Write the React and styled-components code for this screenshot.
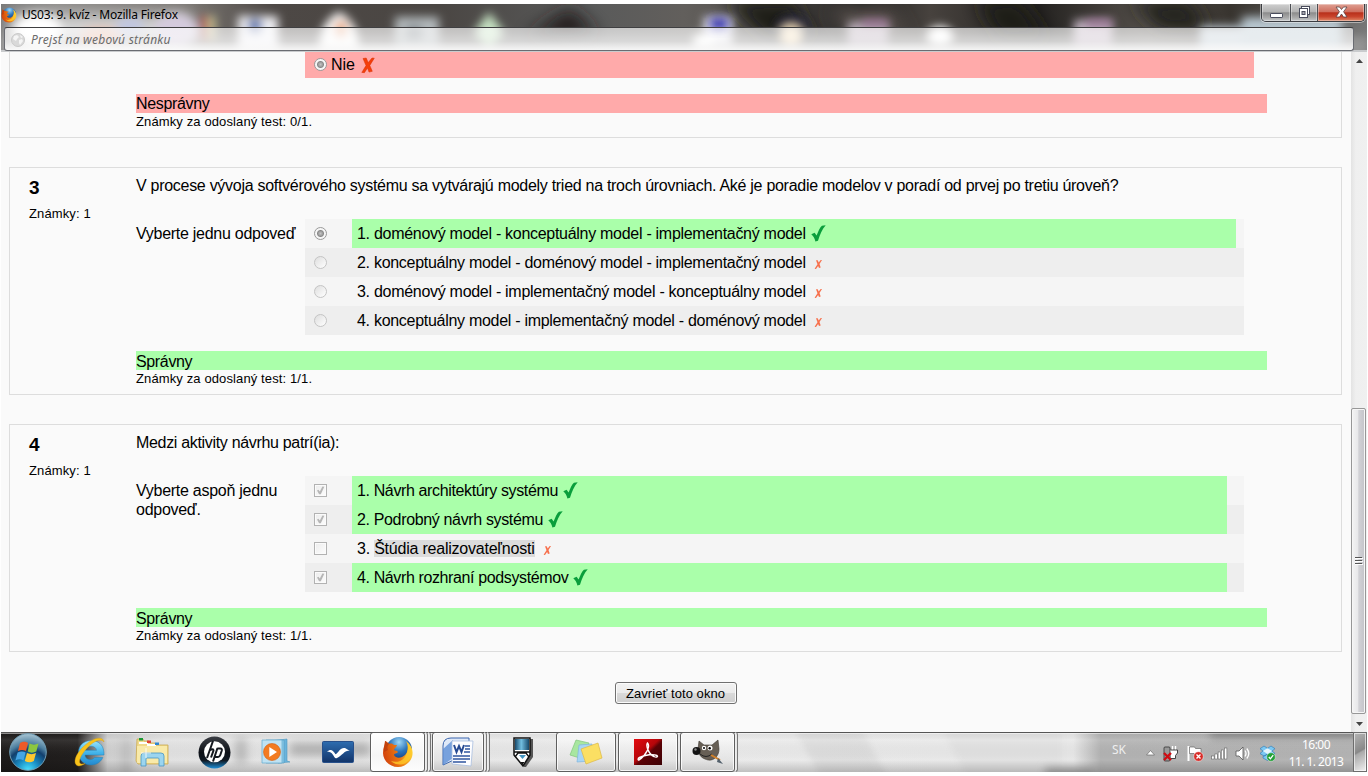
import React from 'react';
import styled, { createGlobalStyle } from 'styled-components';

const GlobalStyle = createGlobalStyle`
  * { box-sizing: border-box; }
  html, body { margin: 0; padding: 0; background: #fff; overflow: hidden; }
  body { font-family: "Liberation Sans", Arial, sans-serif; color: #000; }
  svg { display: block; flex: none; }
`;

const Screen = styled.div`
  width: 1368px;
  height: 776px;
  padding: 4px 1px;
  background: #fff;
`;

const Desktop = styled.div`
  width: 1366px;
  height: 768px;
  display: flex;
  flex-direction: column;
  overflow: hidden;
`;

/* ---------- window frame ---------- */

const WindowFrame = styled.header`
  position: relative;
  height: 48px;
  flex: none;
  overflow: hidden;
  background: #4c4946;
`;

const Backdrop = styled.svg`
  position: absolute;
  inset: 0;
`;

const TitleRow = styled.div`
  position: relative;
  height: 23px;
  display: flex;
  justify-content: space-between;
`;

const WindowTitle = styled.div`
  display: flex;
  align-items: center;
  height: 22px;
  gap: 5px;
  font: 12px/20px "Noto Sans", "Open Sans", sans-serif;
  letter-spacing: -0.17px;
  white-space: nowrap;
`;

const WindowButtons = styled.div`
  display: flex;
  width: 104px;
  height: 18px;
  margin-right: 2px;
  border: 1px solid #3b3d42;
  border-top: 0;
  border-radius: 0 0 5px 5px;
  box-shadow: 0 0 0 1px rgba(255, 255, 255, 0.45);
  overflow: hidden;
`;

const WindowButton = styled.div`
  flex: none;
  width: ${(p) => p.$width}px;
  display: flex;
  align-items: center;
  justify-content: center;
  padding-bottom: 1px;
  border-left: ${(p) => (p.$first ? '0' : '1px solid #4b4d52')};
  box-shadow: inset 0 0 0 1px rgba(255, 255, 255, 0.35);
  background: ${(p) =>
    p.$close
      ? 'linear-gradient(#dfa093 0, #cf6f5f 45%, #b8301b 52%, #c9452d 75%, #e08a68 100%)'
      : 'linear-gradient(#cfcfcf 0, #b3b3b3 45%, #8c8c8c 52%, #a9a9a9 80%, #c4c8ca 100%)'};
`;

const AddressBar = styled.div`
  position: relative;
  width: 1350px;
  height: 24px;
  margin-left: 3px;
  display: flex;
  align-items: center;
  gap: 6px;
  padding: 2px 0 0 6px;
  border: 1px solid #6a6c72;
  border-top-color: #3f3f41;
  border-radius: 3px;
  background: linear-gradient(rgba(255, 255, 255, 0.66) 0, rgba(255, 255, 255, 0.68) 60%, rgba(255, 255, 255, 0.92) 100%);
  font: italic 12px/20px "Noto Sans", "Open Sans", sans-serif;
  letter-spacing: 0.25px;
  color: #6b6b6b;
`;

/* ---------- page ---------- */

const Viewport = styled.main`
  flex: 1;
  display: flex;
  min-height: 0;
  background: #fafafa;
`;

const Page = styled.div`
  width: 1350px;
  display: flex;
  flex-direction: column;
  padding-left: 8px;
`;

const Question = styled.section`
  width: 1333px;
  height: ${(p) => p.$height}px;
  flex: none;
  display: flex;
  margin-bottom: 29px;
  border: 1px solid #ddd;
  border-top-width: ${(p) => (p.$cut ? 0 : 1)}px;
`;

const Info = styled.div`
  width: 126px;
  flex: none;
  padding: 9px 0 0 19px;
`;

const Number = styled.div`
  font: bold 19px/22px "Liberation Sans", Arial, sans-serif;
`;

const Grade = styled.div`
  font-size: 13px;
  line-height: 17px;
  letter-spacing: 0.12px;
  white-space: nowrap;
`;

const InfoGrade = styled(Grade)`
  margin-top: 6px;
`;

const Body = styled.div`
  width: 1131px;
`;

const Prompt = styled.div`
  height: 51px;
  padding-top: 8px;
  font-size: 16px;
  line-height: 19px;
  white-space: nowrap;
  letter-spacing: ${(p) => p.$spacing}px;
`;

const AnswerArea = styled.div`
  display: flex;
  font-size: 16px;
  line-height: 19px;
`;

const AnswerLabel = styled.div`
  width: 169px;
  flex: none;
  padding: 5px 5px 0 0;
  letter-spacing: -0.27px;
`;

const Answers = styled.div`
  width: 939px;
`;

const AnswerRow = styled.div`
  display: flex;
  height: 29px;
  background: ${(p) => (p.$odd ? '#eee' : '#f5f5f5')};
`;

const ControlCell = styled.div`
  width: 47px;
  padding: 8px 0 0 9px;
`;

const AnswerCell = styled.div`
  width: ${(p) => p.$width}px;
  display: flex;
  padding: 5px 0 0 5px;
  background: ${(p) => (p.$correct ? '#afa' : 'transparent')};
  white-space: nowrap;
`;

const AnswerText = styled.span`
  margin-left: ${(p) => p.$indent || 0}px;
  letter-spacing: ${(p) => p.$spacing || 0}px;
`;

const Selected = styled.span`
  background: #dcdcdc;
`;

const WrongRow = styled.div`
  display: flex;
  width: 949px;
  height: 26px;
  padding: 3px 0 0 9px;
  background: #faa;
`;

const Feedback = styled.div`
  height: 19px;
  margin-top: 16px;
  font-size: 16px;
  line-height: ${(p) => (p.$correct ? 21 : 19)}px;
  letter-spacing: -0.35px;
  background: ${(p) => (p.$correct ? '#afa' : '#faa')};
`;

const Radio = styled.div`
  width: 13px;
  height: 13px;
  margin-top: ${(p) => p.$top || 0}px;
  flex: none;
  border-radius: 50%;
  border: 1px solid ${(p) => (p.$on ? '#9a9a9a' : '#c4c4c4')};
  background: ${(p) =>
    p.$on
      ? 'radial-gradient(circle at 50% 50%, #c4c4c4 0, #999 2.4px, #888 3px, #f6f6f6 4px)'
      : 'linear-gradient(135deg, #dedede, #fff)'};
`;

const Checkbox = styled.div`
  width: 13px;
  height: 13px;
  border: 1px solid #b2b2b2;
  box-shadow: inset 0 0 0 1px #fbfbfb;
  background: linear-gradient(135deg, #ececec, #fdfdfd);
`;

const CloseArea = styled.div`
  width: 1333px;
  display: flex;
  justify-content: center;
  padding-top: 1px;
`;

const CloseButton = styled.button`
  width: 122px;
  height: 22px;
  padding: 1px 0 0;
  border: 1px solid #707070;
  border-radius: 3px;
  box-shadow: inset 0 0 0 1px #fbfbfb;
  background: linear-gradient(#f2f2f2 0, #ebebeb 48%, #dadada 50%, #cfcfcf 100%);
  font: 13px/18px "Liberation Sans", Arial, sans-serif;
  letter-spacing: 0.06px;
  color: #000;
`;

const Scrollbar = styled.div`
  width: 16px;
  display: flex;
  flex-direction: column;
  align-items: center;
  background: linear-gradient(90deg, #e3e3e3, #efefef 30%, #f0f0f0);
`;

const ScrollArrow = styled.div`
  height: 17px;
  padding-top: ${(p) => p.$top}px;
`;

const ScrollThumb = styled.div`
  width: 15px;
  height: 306px;
  margin: ${(p) => p.$offset}px 0 0 -1px;
  display: flex;
  align-items: center;
  justify-content: center;
  border: 1px solid #979797;
  border-radius: 2px;
  box-shadow: inset 0 0 0 1px #f6f6f6;
  background: linear-gradient(90deg, #f4f4f4 0, #e8e8ea 45%, #d2d2d6 52%, #c3c3c8 100%);
`;

/* ---------- taskbar ---------- */

const Taskbar = styled.footer`
  position: relative;
  height: 40px;
  flex: none;
  overflow: hidden;
`;

const TaskbarItems = styled.div`
  position: relative;
  display: flex;
  height: 40px;
`;

const StartSlot = styled.div`
  width: 58px;
  padding: 1px 0 0 7px;
`;

const PinnedSlot = styled.div`
  width: ${(p) => p.$width || 62}px;
  display: flex;
  align-items: center;
  justify-content: center;
`;

const TaskGroup = styled.div`
  display: flex;
  margin-left: ${(p) => p.$gap || 0}px;
`;

const TaskButton = styled.div`
  width: ${(p) => p.$width}px;
  height: 40px;
  display: flex;
  align-items: center;
  justify-content: center;
  border: 1px solid #5f5f5f;
  border-radius: 3px;
  box-shadow: inset 0 0 0 1px rgba(255, 255, 255, 0.8);
  background: ${(p) =>
    p.$active
      ? 'linear-gradient(#fff, #f5f5f5 60%, #fdfdfd)'
      : 'linear-gradient(rgba(255,255,255,.7), rgba(240,240,240,.5) 50%, rgba(205,205,205,.6))'};
`;

const StackEdge = styled.div`
  width: 3px;
  height: 40px;
  border: 1px solid #777;
  border-left-color: #eee;
  border-radius: 0 3px 3px 0;
  background: #e6e6e6;
`;

const Tray = styled.div`
  margin-left: auto;
  display: flex;
  align-items: center;
  color: #fff;
`;

const Language = styled.div`
  width: 34px;
  padding-bottom: 4px;
  font: 12px/16px "Noto Sans", "Open Sans", sans-serif;
  color: #eee;
`;

const TrayIcon = styled.div`
  width: ${(p) => p.$width || 24}px;
  padding-top: 2px;
`;

const Clock = styled.div`
  width: 66px;
  margin-right: 4px;
  padding-top: 1px;
  text-align: center;
  font: 12px/17px "Noto Sans", "Open Sans", sans-serif;
  letter-spacing: -0.55px;
`;

const ShowDesktop = styled.div`
  width: 14px;
  height: 40px;
  border: 1px solid #6d6d6d;
  box-shadow: inset 0 0 0 1px rgba(255, 255, 255, 0.6);
  background: linear-gradient(150deg, #b5b5b5 0, #888 48%, #aaa 52%, #f0f0f0 100%);
`;

/* ---------- drawings ---------- */

const FrameBackdrop = () => (
  <Backdrop width="1366" height="48" viewBox="1 4 1366 48">
    <defs>
      <linearGradient id="frameBase" x1="0" x2="1" y1="0" y2="0">
        <stop offset="0" stopColor="#777" />
        <stop offset=".04" stopColor="#8a8886" />
        <stop offset=".14" stopColor="#77736f" />
        <stop offset=".2" stopColor="#4d4845" />
        <stop offset=".32" stopColor="#4a4643" />
        <stop offset=".43" stopColor="#595a5a" />
        <stop offset=".5" stopColor="#625f5c" />
        <stop offset=".56" stopColor="#514d4a" />
        <stop offset=".63" stopColor="#252423" />
        <stop offset=".68" stopColor="#47423e" />
        <stop offset=".76" stopColor="#242220" />
        <stop offset=".84" stopColor="#55504b" />
        <stop offset=".9" stopColor="#38342f" />
        <stop offset="1" stopColor="#777" />
      </linearGradient>
      <filter id="soft" x="-40%" y="-60%" width="180%" height="220%"><feGaussianBlur stdDeviation="5" /></filter>
      <filter id="softer" x="-40%" y="-60%" width="180%" height="220%"><feGaussianBlur stdDeviation="9" /></filter>
    </defs>
    <rect x="1" y="4" width="1366" height="48" fill="url(#frameBase)" />
    <g filter="url(#softer)">
      <rect x="10" y="14" width="180" height="46" fill="#d6d6d6" />
      <path d="M525 38 570 8 600 36z" fill="#221e1b" />
      <path d="M725 0h70l20 40h-50z" fill="#1b1a19" />
      <path d="M830 8h60l20 30h-60z" fill="#56504b" />
      <path d="M975 0h45l30 40h-50z" fill="#1e1b19" />
      <path d="M1130 0h60l20 30h-50z" fill="#24211e" />
    </g>
    <g filter="url(#soft)">
      <path d="M0 36h1368v22H0z" fill="#aaa" opacity=".6" />
      <ellipse cx="38" cy="30" rx="24" ry="16" fill="#fff" />
      <ellipse cx="100" cy="36" rx="20" ry="8" fill="#e8b7a4" />
      <ellipse cx="130" cy="26" rx="14" ry="9" fill="#c0c6e0" />
      <ellipse cx="176" cy="30" rx="22" ry="16" fill="#d4cadd" />
      <rect x="200" y="16" width="8" height="24" fill="#b5655c" />
      <rect x="209" y="16" width="6" height="24" fill="#cfcb95" />
      <rect x="238" y="16" width="40" height="34" fill="#f0f0f4" />
      <ellipse cx="255" cy="26" rx="8" ry="8" fill="#5b74ae" />
      <path d="M339 12C352 18 360 32 358 50H320C318 32 326 18 339 12z" fill="#fbfbfb" />
      <ellipse cx="341" cy="29" rx="7" ry="9" fill="#e7a67d" />
      <rect x="395" y="17" width="44" height="32" fill="#b3b9bc" />
      <ellipse cx="414" cy="33" rx="10" ry="8" fill="#7d8489" />
      <path d="M489 12 504 32 489 50 474 32z" fill="#c6e2c2" />
      <rect x="704" y="17" width="28" height="30" fill="#e8e8ee" />
      <rect x="694" y="34" width="20" height="14" fill="#fff" />
      <ellipse cx="792" cy="26" rx="16" ry="10" fill="#2a2b4a" />
      <ellipse cx="791" cy="36" rx="11" ry="11" fill="#f4dfba" />
      <rect x="848" y="22" width="40" height="26" fill="#b9adb9" />
      <ellipse cx="940" cy="36" rx="13" ry="10" fill="#fff" />
      <rect x="1074" y="20" width="38" height="28" fill="#bfb1bf" />
      <rect x="1200" y="26" width="130" height="26" fill="#bfcbd4" />
      <rect x="1242" y="17" width="100" height="32" fill="#b7c6cf" />
    </g>
    <g filter="url(#soft)">
      <rect x="710" y="18" width="18" height="12" fill="#3430ac" />
      <rect x="862" y="20" width="26" height="6" fill="#96688f" />
      <rect x="1086" y="20" width="26" height="6" fill="#96688f" />
    </g>
    <rect x="1" y="50" width="1366" height="2" fill="#c9cbcd" />
  </Backdrop>
);

const Firefox = ({ size }) => (
  <svg width={size} height={size} viewBox="0 0 32 32">
    <defs>
      <radialGradient id="ffGlobe" cx=".5" cy=".2" r=".8">
        <stop offset="0" stopColor="#9fd8f6" /><stop offset=".45" stopColor="#2d76bd" /><stop offset="1" stopColor="#102a6a" />
      </radialGradient>
      <linearGradient id="ffFox" x1="0" x2="1" y1=".6" y2=".4">
        <stop offset="0" stopColor="#d2410c" /><stop offset=".55" stopColor="#ec7a13" /><stop offset="1" stopColor="#ffd53a" />
      </linearGradient>
    </defs>
    <circle cx="17" cy="14" r="13" fill="url(#ffGlobe)" />
    <path d="M3 5c1 0 3 2 4 3 2-1 4 0 5 1l3 0c0 2-3 3-3 5 1 1 3 0 4 2-1 2-4 1-4 3 2 4 8 3 11 0 4-4 3-10 1-14 5 4 8 9 6 16-2 6-8 10-14 10C7 31 1 24 1 17 1 12 3 9 3 5z" fill="url(#ffFox)" />
    <path d="M26 7c5 6 5 14-1 19-5 4-12 3-16-1 8 3 18-2 17-18z" fill="#ffc928" opacity=".8" />
    <path d="M3 5c1 0 3 2 4 3-2 2-2 4-1 6L2 16C1 12 3 9 3 5z" fill="#b83a0d" opacity=".7" />
  </svg>
);

const Globe = () => (
  <svg width="14" height="14" viewBox="0 0 14 14">
    <circle cx="7" cy="7" r="6.5" fill="#d9d9d9" stroke="#c9c9c9" />
    <path d="M3 3l3-1 2 2-2 2-1 2-3-2zM8 7l3-1 1 2-3 4-1-2zM9 2l3 2-2 1z" fill="#f5f5f5" />
  </svg>
);

const Mark = styled.svg`
  margin: ${(p) => p.$margin};
`;

const Tick = () => (
  <Mark width="15" height="17" viewBox="0 0 15 17" $margin="1px 0 0 5px">
    <path d="M.3 9.3 3.6 7.7 5.6 10.6C7.300 6 9 2.400 10.900.7L14.700.2C11 4.500 9 9.500 7 15.800L4.400 16.400C3.700 13.300 2.300 11 .3 9.300z" fill="#0a9e3c" />
  </Mark>
);

const SmallCross = () => (
  <Mark width="9" height="11" viewBox="0 0 9 11" $margin="6px 0 0 8px">
    <path d="M2 1.300H3.700L4.700 3.600 6.700.9 8 1.100 5.500 5.100 6.700 8.600 5 9.100 4.100 7 2 9.900.6 9.700 3.500 5.300z" fill="#f7704c" />
  </Mark>
);

const BigCross = () => (
  <Mark width="14" height="17" viewBox="0 0 14 17" $margin="2px 0 0 6px">
    <path d="M2 1.500 5.200 1l2 4.600L11 1l2.300.2L8.800 8.400l2.500 5.900-3.300.8-1.500-4L3.400 15.700.8 15.400 5 8.600z" fill="#f53d0a" stroke="#d53305" strokeWidth=".5" />
  </Mark>
);

const CheckGlyph = () => (
  <svg width="11" height="11" viewBox="0 0 11 11">
    <path d="M2 5.500 3.500 4.800 4.800 6.600 7.400 1.600 9.300 1.800 5.800 9.300H4.100z" fill="#b6b6b6" />
  </svg>
);

const MinimizeGlyph = () => (
  <svg width="13" height="14" viewBox="0 0 13 14"><rect x=".5" y="8.500" width="12" height="4" rx=".6" fill="#fff" stroke="#494c5c" /></svg>
);

const RestoreGlyph = () => (
  <svg width="13" height="13" viewBox="0 0 13 13">
    <rect x="3.500" y=".5" width="8" height="8" fill="#fff" stroke="#494c5c" />
    <rect x="1.500" y="2.500" width="8" height="9" fill="#fff" stroke="#494c5c" />
    <rect x="4" y="5.500" width="3" height="3" fill="#a8a8b0" stroke="#494c5c" />
  </svg>
);

const CloseGlyph = () => (
  <svg width="13" height="12" viewBox="0 0 13 12">
    <path d="M1 1h3.500l2 2.500L8.500 1H12L8.600 5.700 12 11H8.500l-2-3-2 3H1l3.400-5.300z" fill="#fff" stroke="#5a4444" strokeWidth=".8" />
  </svg>
);

const UpArrow = () => (
  <svg width="7" height="4" viewBox="0 0 7 4"><path d="M3.500 0 7 4H0z" fill="#444" /></svg>
);

const DownArrow = () => (
  <svg width="7" height="4" viewBox="0 0 7 4"><path d="M3.500 4 0 0h7z" fill="#444" /></svg>
);

const Grip = () => (
  <svg width="8" height="9" viewBox="0 0 8 9"><path d="M0 .5h7M0 3.500h7M0 6.500h7" stroke="#555" /><path d="M0 1.500h8M0 4.500h8M0 7.500h8" stroke="#fff" /></svg>
);

const TaskbarBackdrop = () => (
  <Backdrop width="1366" height="40" viewBox="1 732 1366 40">
    <defs>
      <linearGradient id="barBase" x1="1" x2="1367" y1="0" y2="0" gradientUnits="userSpaceOnUse">
        <stop offset="0" stopColor="#1c1a19" />
        <stop offset=".056" stopColor="#211e1d" />
        <stop offset=".078" stopColor="#d0d0d0" />
        <stop offset=".12" stopColor="#e2e2e2" />
        <stop offset=".5" stopColor="#ebebeb" />
        <stop offset=".785" stopColor="#e8e8e8" />
        <stop offset=".805" stopColor="#b3b3b3" />
        <stop offset="1" stopColor="#b4b4b4" />
      </linearGradient>
      <linearGradient id="barShade" x1="0" x2="0" y1="0" y2="1">
        <stop offset="0" stopColor="#000" stopOpacity=".04" />
        <stop offset=".2" stopColor="#fff" stopOpacity=".1" />
        <stop offset=".7" stopColor="#000" stopOpacity="0" />
        <stop offset="1" stopColor="#000" stopOpacity=".18" />
      </linearGradient>
      <filter id="haze" x="-20%" y="-50%" width="140%" height="200%"><feGaussianBlur stdDeviation="4" /></filter>
      <filter id="edgeHaze" x="-20%" y="-50%" width="140%" height="200%"><feGaussianBlur stdDeviation="3" /></filter>
    </defs>
    <rect x="1" y="732" width="1366" height="40" fill="url(#barBase)" />
    <path d="M792 725h68l28 54h-66z" fill="#dadada" opacity=".75" filter="url(#edgeHaze)" />
    <path d="M940 725h122v54H968z" fill="#e0e0e0" opacity=".75" filter="url(#edgeHaze)" />
    <g filter="url(#haze)">
      <rect x="120" y="738" width="12" height="38" fill="#c1c1c1" />
      <rect x="290" y="742" width="80" height="14" fill="#b5b5b5" />
      <rect x="235" y="738" width="12" height="25" fill="#bcbcbc" />
      <rect x="1210" y="728" width="150" height="11" fill="#8a8a8a" />
      <rect x="1045" y="768" width="50" height="10" fill="#a5a5a5" />
    </g>
    <rect x="1" y="732" width="1366" height="40" fill="url(#barShade)" />
    <rect x="1" y="732" width="1366" height="1" fill="#555" />
    <rect x="1" y="733" width="1366" height="1" fill="#fff" opacity=".5" />
  </Backdrop>
);

const StartOrb = () => (
  <svg width="40" height="38" viewBox="0 0 40 38">
    <defs>
      <radialGradient id="orb" cx=".5" cy="1" r="1">
        <stop offset="0" stopColor="#4be4ff" /><stop offset=".3" stopColor="#198dc4" /><stop offset=".58" stopColor="#123f6d" /><stop offset=".72" stopColor="#4d7f9f" /><stop offset="1" stopColor="#a9c5d3" />
      </radialGradient>
    </defs>
    <circle cx="20" cy="19" r="18.3" fill="url(#orb)" stroke="#6f9db5" strokeWidth="1" />
    <path d="M12 10c3-2 6-1.500 8 0l-2 8c-3-1.500-5-1.500-8 0z" fill="#ee5a28" />
    <path d="M21.500 10.500c3 1.500 6 1.500 9 0l-2.200 8c-3 1.500-6 1.500-8.600 0z" fill="#8cc63f" />
    <path d="M9.600 19.500c3-1.500 5.500-1.500 8 0l-2.200 8c-2.500-1.800-5-1.800-8 0z" fill="#45a5e4" />
    <path d="M19 20c3 1.500 6 1.500 9 0l-2.200 8c-3 1.800-6 1.500-9 0z" fill="#fdc82f" />
  </svg>
);

const InternetExplorer = () => (
  <svg width="32" height="32" viewBox="0 0 32 32">
    <defs><linearGradient id="ie" x1="0" x2="0" y1="0" y2="1"><stop offset="0" stopColor="#9be3fa" /><stop offset=".5" stopColor="#43b4ea" /><stop offset="1" stopColor="#2389cf" /></linearGradient></defs>
    <path d="M30 19H11c.3 4.500 6.500 6.500 9.500 2.500h8.300C24 33 4.500 31 4.500 16.500 4.500 2 26 .5 29.300 13c.6 2 .7 4 .7 6zM11.200 14.300h11.300c-.8-5.500-10-5.500-11.300 0z" fill="url(#ie)" stroke="#2381b8" strokeWidth=".5" />
    <path d="M30 6C29-1 18 2 9 11 1 19-1 27 3 29.500c2 1.200 5 0 8-2-3 1-5.500.8-5.500-2C5.500 21 11 13 18 7.500 23 4 28 3 30 6z" fill="#f9c31b" stroke="#d99f0b" strokeWidth=".4" />
  </svg>
);

const Explorer = () => (
  <svg width="34" height="30" viewBox="0 0 34 30">
    <path d="M2 2h6l1 2h5l1 2h5l1 2h12v19H3L1 24z" fill="#f0da8a" stroke="#c9a850" strokeWidth=".8" />
    <path d="M4 6h9M12 8h9" stroke="#fff" strokeWidth="2" />
    <rect x="4" y="1" width="4" height="2.5" fill="#1a9a35" /><rect x="12" y="3.5" width="4" height="2.5" fill="#de4232" /><rect x="20" y="5.5" width="4" height="2.5" fill="#2f86cf" />
    <rect x="2" y="9" width="30" height="17" fill="#fbeeb0" opacity=".8" />
    <path d="M6 29V19q0-3 3-3h17q3 0 3 3v10h-5v-7q0-1-1-1H12q-1 0-1 1v7z" fill="#9cd5ef" stroke="#4796c3" strokeWidth=".8" />
    <path d="M11 11v10M6 16h10" stroke="#fff" strokeWidth=".9" opacity=".9" />
  </svg>
);

const HpLogo = () => (
  <svg width="33" height="33" viewBox="0 0 33 33">
    <defs><linearGradient id="hp" x1="0" x2="0" y1="0" y2="1"><stop offset="0" stopColor="#3a3d43" /><stop offset=".5" stopColor="#0e1218" /><stop offset=".75" stopColor="#101a24" /><stop offset="1" stopColor="#1c8fd8" /></linearGradient></defs>
    <circle cx="16.5" cy="16.5" r="16" fill="url(#hp)" />
    <circle cx="16.5" cy="15.8" r="10.5" fill="#fff" />
    <path d="M15 5 9 22M11.500 14.500q4-2.500 4 0L13 21.500M19.500 12 15 25.500M19.300 12.500h3q2 .3 1.500 2l-1.500 4.500q-.6 1.800-2.300 2h-3" fill="none" stroke="#15191f" strokeWidth="2" />
  </svg>
);

const MediaPlayer = () => (
  <svg width="30" height="28" viewBox="0 0 30 28">
    <path d="M10 3l16-2v22l3 1-12 1z" fill="#6bb4dc" stroke="#4f98c0" strokeWidth=".6" />
    <path d="M5 2h18v23H5z" fill="#8ecbe8" stroke="#4f98c0" strokeWidth=".6" />
    <path d="M1 2h20v23H1z" fill="#bfe2f3" stroke="#5fa9cf" strokeWidth=".7" />
    <circle cx="11" cy="14" r="8.5" fill="#f37b21" stroke="#d55c0c" strokeWidth=".6" />
    <path d="M8.300 9 16 14l-7.700 5z" fill="#fff" />
  </svg>
);

const WaveApp = () => (
  <svg width="32" height="22" viewBox="0 0 32 22">
    <defs><linearGradient id="wave" x1="0" x2="0" y1="0" y2="1"><stop offset="0" stopColor="#2e6db0" /><stop offset="1" stopColor="#123469" /></linearGradient></defs>
    <rect x=".5" y=".5" width="31" height="21" rx="1" fill="url(#wave)" stroke="#27508b" />
    <path d="M5 11C8.500 7.500 11 9 13.500 13.300 16.500 11.500 18.500 6 23 7l5 3c-5-1.500-7 4-13 7-1.200.6-1.800.4-2.700-1C10.500 12.500 8.500 10 5 11z" fill="#fff" />
  </svg>
);

const Word = () => (
  <svg width="32" height="31" viewBox="0 0 32 31">
    <path d="M1 28V9Q1 1 9 1h18v15z" fill="#dfe9f8" stroke="#3a65ad" />
    <path d="M1 28V12L11 3v18z" fill="#5d8fd6" opacity=".8" />
    <path d="M10 4h21l-2 25-19-2z" fill="#fdfdff" stroke="#a9bfdf" strokeWidth=".8" />
    <path d="M12 8l2.500 7L17 9l2.500 6L22 8" fill="none" stroke="#274b93" strokeWidth="2" />
    <path d="M23 9h5M23 12h5M22 15h6M11 19h17M11 22h17M11 25h13" stroke="#2f55a0" strokeWidth="1.3" />
  </svg>
);

const PenApp = () => (
  <svg width="21" height="31" viewBox="0 0 21 31">
    <defs><linearGradient id="pen" x1="0" x2="1" y1="0" y2="0"><stop offset="0" stopColor="#174a6c" /><stop offset=".45" stopColor="#72bee0" /><stop offset="1" stopColor="#174a6c" /></linearGradient></defs>
    <path d="M3 2h17v18l-7 10h-2z" fill="#555" />
    <path d="M1 1h16v17L10 29 1 18z" fill="#fff" stroke="#111" strokeWidth="1.5" />
    <rect x="2" y="2" width="14" height="11" fill="url(#pen)" />
    <path d="M1 15h16M2 20l3-4h8l3 4" fill="none" stroke="#111" strokeWidth="1.3" />
    <path d="M6 18h7l-3.500 4z" fill="#4595c1" /><path d="M7.500 25h4l-2 3z" fill="#111" />
  </svg>
);

const StickyNotes = () => (
  <svg width="34" height="26" viewBox="0 0 34 26">
    <path d="M7 1 20 4 14 20 1 16z" fill="#a8e6a0" stroke="#7fc67a" strokeWidth=".7" />
    <path d="M10 6 23 5 23 22 8 23z" fill="#a7d5f5" stroke="#80b5dc" strokeWidth=".7" />
    <path d="M12 10 29 4l4 15-16 6z" fill="#fbdf63" stroke="#dcb846" strokeWidth=".7" />
  </svg>
);

const Acrobat = () => (
  <svg width="28" height="27" viewBox="0 0 28 27">
    <defs><linearGradient id="pdf" x1="0" x2="1" y1="0" y2="1"><stop offset="0" stopColor="#e40b10" /><stop offset=".45" stopColor="#b5060a" /><stop offset=".55" stopColor="#5a0206" /><stop offset="1" stopColor="#3d0205" /></linearGradient></defs>
    <rect width="28" height="26" fill="url(#pdf)" />
    <path d="M13.500 4c3 3-1 12-8.500 17-1 .5-1.500-1.500.5-2.500 6-3 14-3.500 17.500-2 1.500 1-.5 2.500-3 1C15 15.500 11.500 7 13.500 4z" fill="none" stroke="#fff" strokeWidth="1.4" />
  </svg>
);

const Gimp = () => (
  <svg width="32" height="26" viewBox="0 0 32 26">
    <path d="M7 2l5 4h8l6-5 1 9c0 7-5 12-11 11-4-1-8-3-9-7l-1-4z" fill="#675f55" stroke="#3d3830" strokeWidth=".6" />
    <circle cx="4.5" cy="12" r="4" fill="#141414" /><circle cx="3.5" cy="10.5" r="1.2" fill="#888" />
    <circle cx="12" cy="9" r="2.2" fill="#fff" /><circle cx="18" cy="9" r="2.5" fill="#fff" /><circle cx="12" cy="9" r="1" /><circle cx="17.7" cy="9.3" r="1.2" />
    <path d="M8 15q6 5 12 0" fill="none" stroke="#222" strokeWidth="1" />
    <path d="M19 16l9 5" stroke="#d38028" strokeWidth="2" /><path d="M26 19l5 6-6-2z" fill="#53606c" />
  </svg>
);

const TrayArrow = () => (
  <svg width="9" height="6" viewBox="0 0 9 6"><path d="M4.500.5 8.500 5h-8z" fill="#fff" stroke="#6b6b6b" strokeWidth=".7" /></svg>
);

const PlugIcon = () => (
  <svg width="15" height="17" viewBox="0 0 15 17">
    <rect x="1" y="2" width="6" height="14" rx="1" fill="#999" stroke="#333" strokeWidth=".8" />
    <path d="M9.500 1v4M12.500 1v4" stroke="#fff" strokeWidth="1.4" />
    <path d="M7.500 5h7v3l-2 2.500v3H8" fill="#fff" stroke="#333" strokeWidth=".9" />
    <path d="M1 8l7 7M8 8l-7 7" stroke="#d00b12" strokeWidth="2.3" />
  </svg>
);

const FlagIcon = () => (
  <svg width="17" height="17" viewBox="0 0 17 17">
    <path d="M1.500 1v15" stroke="#fff" strokeWidth="2" /><path d="M2.500 2h5l1 1.500H14V10H8L7 8.500H2.500z" fill="#fff" stroke="#555" strokeWidth=".6" />
    <circle cx="11.500" cy="11.500" r="4.800" fill="#d72b27" stroke="#fff" strokeWidth=".5" />
    <path d="M9.500 9.500l4 4M13.500 9.500l-4 4" stroke="#fff" strokeWidth="1.4" />
  </svg>
);

const SignalIcon = () => (
  <svg width="17" height="13" viewBox="0 0 17 13">
    {[3, 5, 7, 9, 11].map((h, i) => (
      <rect key={h} x={i * 3.2 + 0.7} y={12 - h} width="2.4" height={h} fill="#fff" stroke="#555" strokeWidth=".5" />
    ))}
  </svg>
);

const SpeakerIcon = () => (
  <svg width="16" height="15" viewBox="0 0 16 15">
    <path d="M1 5h3l4-4v13l-4-4H1z" fill="#fff" stroke="#555" strokeWidth=".8" />
    <path d="M10 4.500q2 3 0 6M11.800 2.500q4 5 0 10" fill="none" stroke="#fff" strokeWidth="1.3" />
  </svg>
);

const DropboxIcon = () => (
  <svg width="17" height="17" viewBox="0 0 17 17">
    <path d="M5 1l3.500 2.300L12 1l4 2.700-3 2.300 3 2.500-4 2.500-3.500-2L5 11 1 8.500 4 6 1 3.700zM4 11.500l4.500-2L13 11.500v1.500L8.500 15.500 4 13z" fill="#7cc8f3" stroke="#2878b4" strokeWidth=".6" />
    <path d="M4 6l4.500-2.700L13 6 8.500 9z" fill="#e5f5fd" />
    <circle cx="12" cy="12" r="4.300" fill="#22a038" stroke="#fff" strokeWidth=".4" /><path d="M9.800 12l1.600 1.800 2.800-3.600" fill="none" stroke="#fff" strokeWidth="1.3" />
  </svg>
);

/* ---------- data ---------- */

const modelAnswers = [
  { text: '1. doménový model - konceptuálny model - implementačný model', correct: true, on: true },
  { text: '2. konceptuálny model - doménový model - implementačný model' },
  { text: '3. doménový model - implementačný model - konceptuálny model' },
  { text: '4. konceptuálny model - implementačný model - doménový model' },
];

const designAnswers = [
  { number: '1. ', text: 'Návrh architektúry systému', correct: true, on: true, spacing: -0.37 },
  { number: '2. ', text: 'Podrobný návrh systému', correct: true, on: true, spacing: -0.35 },
  { number: '3. ', text: 'Štúdia realizovateľnosti', selected: true, spacing: -0.22 },
  { number: '4. ', text: 'Návrh rozhraní podsystémov', correct: true, on: true, spacing: -0.38 },
];

export default function App() {
  return (
    <Screen>
      <GlobalStyle />
      <Desktop>
        <WindowFrame>
          <FrameBackdrop />
          <TitleRow>
            <WindowTitle><Firefox size={16} /><span>US03: 9. kvíz - Mozilla Firefox</span></WindowTitle>
            <WindowButtons>
              <WindowButton $width={28} $first><MinimizeGlyph /></WindowButton>
              <WindowButton $width={27}><RestoreGlyph /></WindowButton>
              <WindowButton $width={47} $close><CloseGlyph /></WindowButton>
            </WindowButtons>
          </TitleRow>
          <AddressBar><Globe /><span>Prejsť na webovú stránku</span></AddressBar>
        </WindowFrame>

        <Viewport>
          <Page>
            <Question $height={86} $cut>
              <Info />
              <Body>
                <AnswerArea>
                  <AnswerLabel />
                  <WrongRow><Radio $on $top={3} /><AnswerText $indent={4}>Nie</AnswerText><BigCross /></WrongRow>
                </AnswerArea>
                <Feedback>Nesprávny</Feedback>
                <Grade>Známky za odoslaný test: 0/1.</Grade>
              </Body>
            </Question>

            <Question $height={228}>
              <Info><Number>3</Number><InfoGrade>Známky: 1</InfoGrade></Info>
              <Body>
                <Prompt $spacing={-0.285}>V procese vývoja softvérového systému sa vytvárajú modely tried na troch úrovniach. Aké je poradie modelov v poradí od prvej po tretiu úroveň?</Prompt>
                <AnswerArea>
                  <AnswerLabel>Vyberte jednu odpoveď</AnswerLabel>
                  <Answers>
                    {modelAnswers.map((a, i) => (
                      <AnswerRow key={a.text} $odd={i % 2 === 1}>
                        <ControlCell><Radio $on={a.on} /></ControlCell>
                        <AnswerCell $width={884} $correct={a.correct}>
                          <AnswerText $spacing={-0.288}>{a.text}</AnswerText>
                          {a.correct ? <Tick /> : <SmallCross />}
                        </AnswerCell>
                      </AnswerRow>
                    ))}
                  </Answers>
                </AnswerArea>
                <Feedback $correct>Správny</Feedback>
                <Grade>Známky za odoslaný test: 1/1.</Grade>
              </Body>
            </Question>

            <Question $height={228}>
              <Info><Number>4</Number><InfoGrade>Známky: 1</InfoGrade></Info>
              <Body>
                <Prompt $spacing={-0.32}>Medzi aktivity návrhu patrí(ia):</Prompt>
                <AnswerArea>
                  <AnswerLabel>Vyberte aspoň jednu odpoveď.</AnswerLabel>
                  <Answers>
                    {designAnswers.map((a, i) => (
                      <AnswerRow key={a.text} $odd={i % 2 === 1}>
                        <ControlCell><Checkbox>{a.on && <CheckGlyph />}</Checkbox></ControlCell>
                        <AnswerCell $width={875} $correct={a.correct}>
                          <AnswerText $spacing={a.spacing}>{a.number}{a.selected ? <Selected>{a.text}</Selected> : a.text}</AnswerText>
                          {a.correct ? <Tick /> : <SmallCross />}
                        </AnswerCell>
                      </AnswerRow>
                    ))}
                  </Answers>
                </AnswerArea>
                <Feedback $correct>Správny</Feedback>
                <Grade>Známky za odoslaný test: 1/1.</Grade>
              </Body>
            </Question>

            <CloseArea><CloseButton>Zavrieť toto okno</CloseButton></CloseArea>
          </Page>
          <Scrollbar>
            <ScrollArrow $top={7}><UpArrow /></ScrollArrow>
            <ScrollThumb $offset={339}><Grip /></ScrollThumb>
            <ScrollArrow $top={8}><DownArrow /></ScrollArrow>
          </Scrollbar>
        </Viewport>

        <Taskbar>
          <TaskbarBackdrop />
          <TaskbarItems>
            <StartSlot><StartOrb /></StartSlot>
            <PinnedSlot><InternetExplorer /></PinnedSlot>
            <PinnedSlot><Explorer /></PinnedSlot>
            <PinnedSlot><HpLogo /></PinnedSlot>
            <PinnedSlot><MediaPlayer /></PinnedSlot>
            <PinnedSlot><WaveApp /></PinnedSlot>
            <TaskGroup $gap={1}><TaskButton $width={55} $active><Firefox size={32} /></TaskButton><StackEdge /><StackEdge /></TaskGroup>
            <TaskGroup $gap={1}><TaskButton $width={52}><Word /></TaskButton><StackEdge /><StackEdge /></TaskGroup>
            <PinnedSlot $width={66}><PenApp /></PinnedSlot>
            <TaskGroup><TaskButton $width={60}><StickyNotes /></TaskButton></TaskGroup>
            <TaskGroup $gap={2}><TaskButton $width={60}><Acrobat /></TaskButton></TaskGroup>
            <TaskGroup $gap={2}><TaskButton $width={55}><Gimp /></TaskButton><StackEdge /></TaskGroup>
            <Tray>
              <Language>SK</Language>
              <TrayIcon $width={17}><TrayArrow /></TrayIcon>
              <TrayIcon><PlugIcon /></TrayIcon>
              <TrayIcon><FlagIcon /></TrayIcon>
              <TrayIcon><SignalIcon /></TrayIcon>
              <TrayIcon><SpeakerIcon /></TrayIcon>
              <TrayIcon><DropboxIcon /></TrayIcon>
              <Clock>16:00<br />11. 1. 2013</Clock>
              <ShowDesktop />
            </Tray>
          </TaskbarItems>
        </Taskbar>
      </Desktop>
    </Screen>
  );
}
